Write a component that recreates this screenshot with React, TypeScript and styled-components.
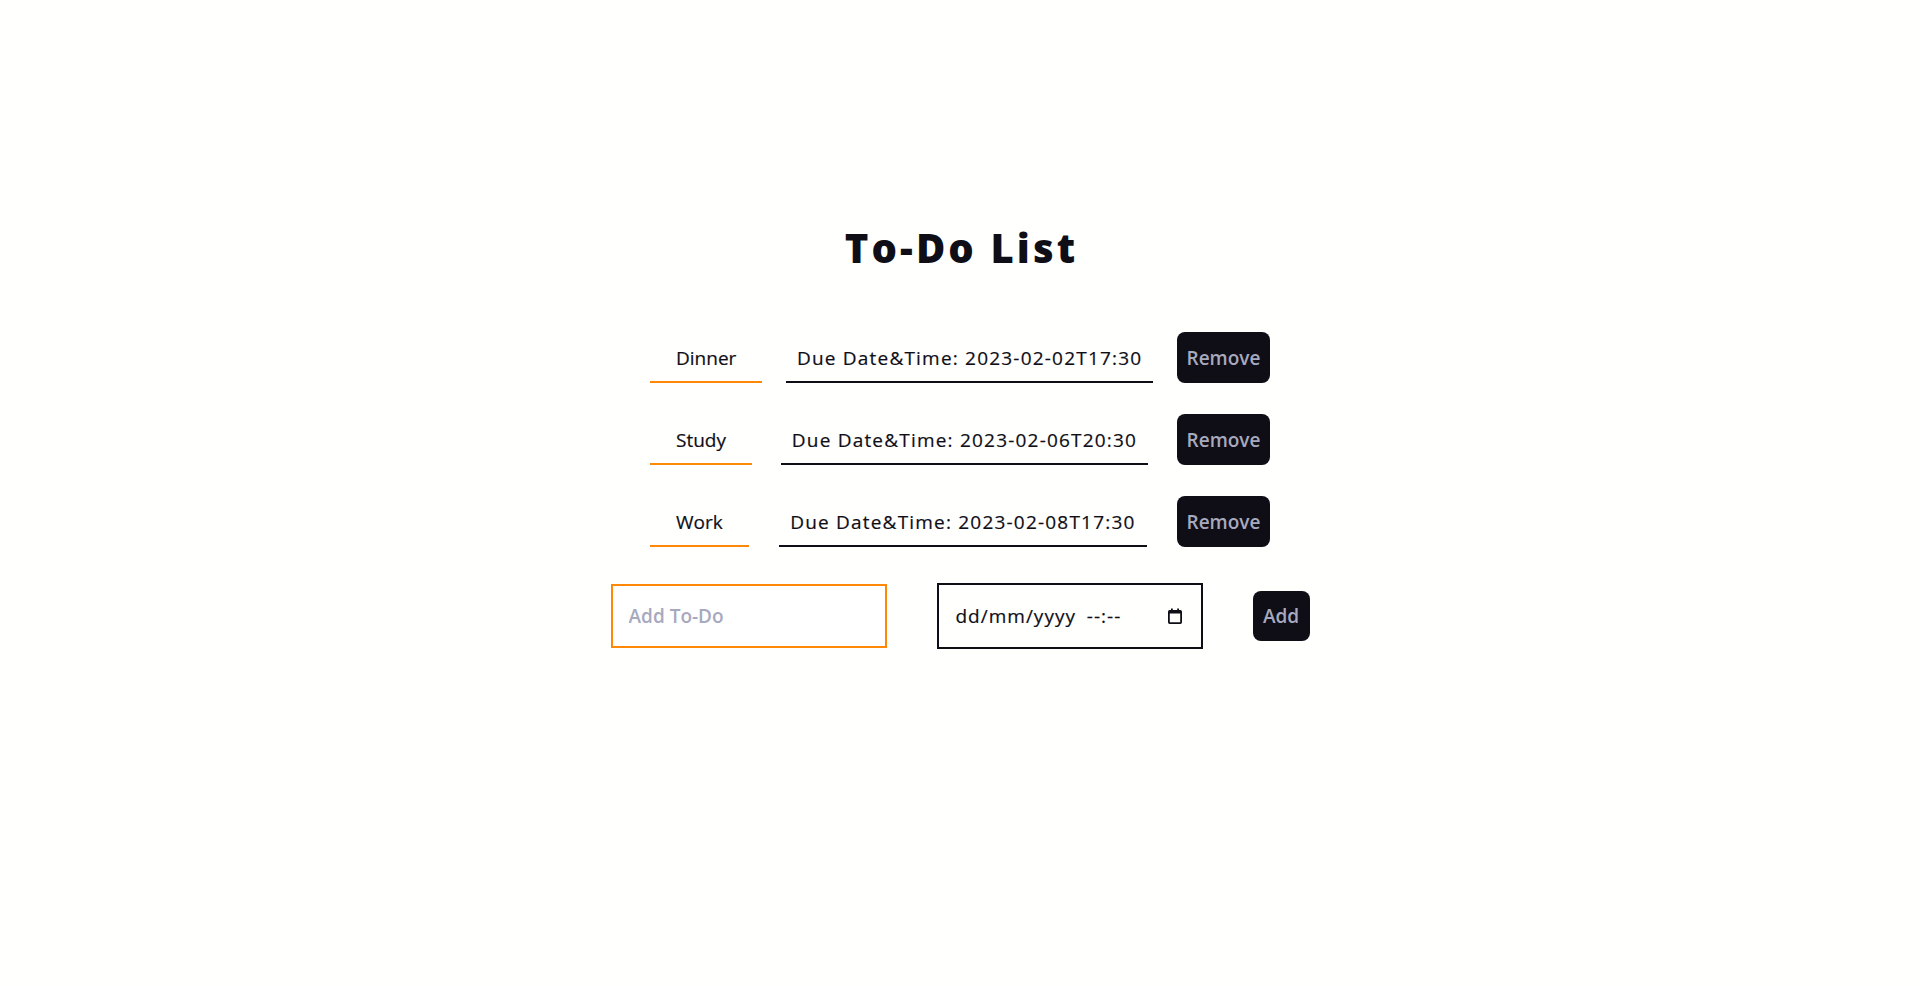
import React, { useState } from "react";
import styled, { createGlobalStyle } from "styled-components";

const GlobalStyle = createGlobalStyle`
  html, body {
    margin: 0;
    padding: 0;
    background: #fffffe;
  }
  body {
    font-family: "Open Sans", Lato, sans-serif;
    color: #0f0e17;
  }
  * { box-sizing: border-box; }
`;

const Page = styled.main`
  display: flex;
  flex-direction: column;
  align-items: center;
  padding-top: 224px;
`;

const Title = styled.h1`
  margin: 0 0 60px;
  padding-left: 3px;
  font-family: "Open Sans", Lato, sans-serif;
  font-size: 40px;
  line-height: 48px;
  font-weight: 800;
  letter-spacing: 3.1px;
  color: #0f0e17;
`;

const List = styled.ul`
  list-style: none;
  margin: 0;
  padding: 0;
  width: 620px;
  display: flex;
  flex-direction: column;
  gap: 31px;
`;

const Row = styled.li`
  display: flex;
  justify-content: space-between;
  align-items: flex-end;
  height: 51px;
`;

const Cell = styled.span<{ $line: string }>`
  display: block;
  font-size: 19px;
  font-weight: 400;
  line-height: 24px;
  padding: 14px 26px 11px;
  border-bottom: 2px solid ${(p) => p.$line};
  color: #0f0e17;
  -webkit-text-stroke: 0.2px #0f0e17;
`;

const DueCell = styled(Cell)`
  padding: 14px 11px 11px 11px;
  letter-spacing: 1.2px;
`;

const DarkButton = styled.button<{ $w: number; $h: number }>`
  width: ${(p) => p.$w}px;
  height: ${(p) => p.$h}px;
  padding: 0;
  border: none;
  border-radius: 8px;
  background: #0f0e17;
  color: #a7a9be;
  font-family: "Open Sans", Lato, sans-serif;
  font-size: 19px;
  font-weight: 600;
  cursor: pointer;
`;

const Form = styled.form`
  display: flex;
  align-items: center;
  gap: 50px;
  margin-top: 36px;
`;

const TextInput = styled.input`
  width: 276px;
  height: 64px;
  padding: 0 16px;
  border: 2px solid #ff8906;
  outline: none;
  font-family: "Open Sans", Lato, sans-serif;
  font-size: 19px;
  font-weight: 600;
  color: #0f0e17;
  &::placeholder { color: #a7a9be; }
`;

const DateField = styled.label`
  position: relative;
  width: 266px;
  height: 66px;
  padding: 0 19px 0 17px;
  border: 2px solid #0f0e17;
  display: flex;
  align-items: center;
  justify-content: space-between;
  font-size: 19px;
  color: #0f0e17;
  -webkit-text-stroke: 0.2px #0f0e17;
  cursor: text;
`;

const DateText = styled.span`
  letter-spacing: 1px;
  word-spacing: 5px;
`;

const HiddenInput = styled.input`
  position: absolute;
  inset: 0;
  opacity: 0;
  width: 100%;
  height: 100%;
  border: none;
`;

const CalendarIcon = () => (
  <svg width="14" height="16" viewBox="0 0 14 16" aria-hidden="true">
    <rect x="0.9" y="2.9" width="12.2" height="12.2" rx="0.8" fill="none" stroke="#0f0e17" strokeWidth="1.8" />
    <rect x="0.9" y="2.9" width="12.2" height="2.6" fill="#0f0e17" />
    <rect x="3" y="0.5" width="1.8" height="3" fill="#0f0e17" />
    <rect x="9.2" y="0.5" width="1.8" height="3" fill="#0f0e17" />
  </svg>
);

const todos = [
  { name: "Dinner", due: "2023-02-02T17:30" },
  { name: "Study", due: "2023-02-06T20:30" },
  { name: "Work", due: "2023-02-08T17:30" },
];

export default function App() {
  const [items, setItems] = useState(todos);
  return (
    <>
      <GlobalStyle />
      <Page>
        <Title>To-Do List</Title>
        <List>
          {items.map((t, i) => (
            <Row key={t.name}>
              <Cell $line="#ff8906">{t.name}</Cell>
              <DueCell $line="#0f0e17">Due Date&amp;Time: {t.due}</DueCell>
              <DarkButton $w={93} $h={51} onClick={() => setItems(items.filter((_, j) => j !== i))}>
                Remove
              </DarkButton>
            </Row>
          ))}
        </List>
        <Form onSubmit={(e) => e.preventDefault()}>
          <TextInput placeholder="Add To-Do" />
          <DateField>
            <DateText>dd/mm/yyyy --:--</DateText>
            <CalendarIcon />
            <HiddenInput type="datetime-local" aria-label="Due date and time" />
          </DateField>
          <DarkButton $w={57} $h={50} type="submit">
            Add
          </DarkButton>
        </Form>
      </Page>
    </>
  );
}
